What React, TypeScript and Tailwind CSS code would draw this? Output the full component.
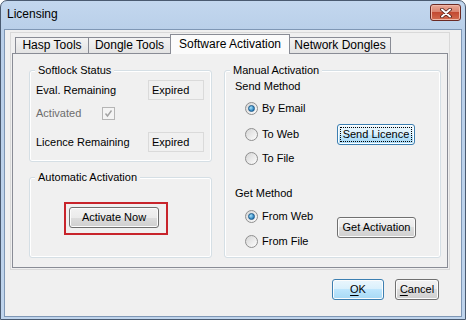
import type { ReactNode } from 'react';

const btnGray =
  'flex items-center justify-center rounded-[3px] border border-[#707070] bg-[linear-gradient(to_bottom,#f2f2f2_0%,#ebebeb_50%,#dddddd_50%,#cfcfcf_100%)] shadow-[inset_0_0_0_1px_#fcfcfc] text-black';
const btnBlue =
  'flex items-center justify-center rounded-[3px] border border-[#3c7fb1] bg-[linear-gradient(to_bottom,#eaf6fd_0%,#d9f0fc_50%,#bee6fd_50%,#a7d9f5_100%)] shadow-[inset_0_0_0_1px_#fcfcfc] text-black';

function Group({ title, className, children }: { title: string; className: string; children: ReactNode }) {
  return (
    <div className={`relative rounded-[3px] border border-[#d5dfe5] shadow-[inset_0_0_0_1px_#ffffff] ${className}`}>
      <span className="absolute left-[5px] top-[-8px] bg-[#f0f0f0] px-[3px] leading-[15px]">{title}</span>
      {children}
    </div>
  );
}

function Field({ children }: { children: ReactNode }) {
  return (
    <div className="flex h-[20px] w-[56px] items-center border border-[#dadada] bg-[#f0f0f0] pl-[3px]">{children}</div>
  );
}

function Radio({ checked, label, className = '' }: { checked?: boolean; label: string; className?: string }) {
  return (
    <div className={`flex h-[20px] items-center gap-[4px] ${className}`}>
      <span className="flex h-[13px] w-[13px] items-center justify-center rounded-full border border-[#8f8f8f] bg-[linear-gradient(135deg,#d6d6d6,#fdfdfd)]">
        {checked && (
          <span className="h-[7px] w-[7px] rounded-full border border-[#1d5a8a] bg-[radial-gradient(circle_at_35%_35%,#a6e3fb,#2a7fbd_70%)]" />
        )}
      </span>
      <span>{label}</span>
    </div>
  );
}

export default function App() {
  return (
    <div className="flex h-[320px] w-[466px] flex-col rounded-t-[7px] border border-[#4a5a70] bg-[linear-gradient(to_bottom,#c3d7ee,#b9cfe9_30px,#bfd4ec)] font-['Liberation_Sans',Arial,sans-serif] text-[12px] leading-[15px] text-black">
      {/* title bar */}
      <div className="flex h-[28px] shrink-0 items-start justify-between">
        <span className="mt-[6px] pl-[6px]">Licensing</span>
        <div className="mr-[4px] mt-[3px] flex h-[17px] w-[31px] items-center justify-center rounded-[3px] border border-[#6b2a24] bg-[linear-gradient(to_bottom,#eaa997_0%,#d98470_45%,#c34a32_50%,#d26c50_100%)] shadow-[inset_0_0_0_1px_#f0b8a8]">
          <svg width="12" height="10" viewBox="0 0 12 10">
            <path d="M2 1.5 L10 8.5 M10 1.5 L2 8.5" stroke="#4a1c16" strokeWidth="3.6" strokeLinecap="round" />
            <path d="M2 1.5 L10 8.5 M10 1.5 L2 8.5" stroke="#ffffff" strokeWidth="2" strokeLinecap="round" />
          </svg>
        </div>
      </div>

      {/* client area */}
      <div className="mx-[3px] mb-[2px] flex h-[288px] flex-col border border-[#7f97b5] bg-[#f0f0f0]">
        <div className="ml-[5px] mt-[2px] flex h-[238px] w-[440px] flex-col border border-[#d9d9d9]">
          {/* tabs */}
          <div className="flex h-[20px] items-end pl-[4px]">
            <div className="flex h-[16px] w-[74px] items-center justify-center border-l border-r border-t border-[#898c95] bg-[linear-gradient(to_bottom,#f4f4f4,#e3e3e3)]">
              Hasp Tools
            </div>
            <div className="-ml-px flex h-[16px] w-[83px] items-center justify-center border-l border-r border-t border-[#898c95] bg-[linear-gradient(to_bottom,#f4f4f4,#e3e3e3)]">
              Dongle Tools
            </div>
            <div className="relative z-10 -mb-px -ml-px flex h-[20px] w-[120px] items-center justify-center border-l border-r border-t border-[#898c95] bg-[#fbfbfb] pb-[1px]">
              Software Activation
            </div>
            <div className="-ml-px flex h-[16px] w-[102px] items-center justify-center border-l border-r border-t border-[#898c95] bg-[linear-gradient(to_bottom,#f4f4f4,#e3e3e3)]">
              Network Dongles
            </div>
          </div>

          {/* tab page */}
          <div className="mx-[1px] flex h-[215px] border border-[#898c95] bg-[#f0f0f0] text-[11px]">
            <div className="ml-[16px] mt-[16px] flex flex-col">
              <Group title="Softlock Status" className="h-[92px] w-[183px]">
                <div className="pl-[6px] pt-[9px]">
                  <div className="flex h-[20px] items-center">
                    <span className="w-[112px]">Eval. Remaining</span>
                    <Field>Expired</Field>
                  </div>
                  <div className="mt-[7px] flex h-[13px] items-center text-[#6d6d6d]">
                    <span className="w-[66px]">Activated</span>
                    <span className="flex h-[13px] w-[13px] items-center justify-center border border-[#b5b5b5] bg-[#f4f4f4]">
                      <svg width="9" height="9" viewBox="0 0 9 9">
                        <path d="M1.5 4.5 L3.5 7 L7.5 1.5" fill="none" stroke="#a3a3a3" strokeWidth="1.4" />
                      </svg>
                    </span>
                  </div>
                  <div className="mt-[12px] flex h-[20px] items-center">
                    <span className="w-[112px]">Licence Remaining</span>
                    <Field>Expired</Field>
                  </div>
                </div>
              </Group>

              <Group title="Automatic Activation" className="mt-[15px] h-[81px] w-[183px]">
                <div className="ml-[34px] mt-[24px] h-[33px] w-[104px] border-2 border-[#c8242b] pl-[3px] pt-[3px]">
                  <button className={`${btnGray} h-[21px] w-[90px]`}>Activate Now</button>
                </div>
              </Group>
            </div>

            <Group title="Manual Activation" className="ml-[12px] mt-[16px] h-[188px] w-[217px]">
              <div className="pl-[10px] pt-[7px]">
                <div className="flex h-[16px] items-center">Send Method</div>
                <div className="mt-[4px] flex">
                  <div className="w-[102px] pl-[10px]">
                    <Radio checked label="By Email" />
                    <Radio label="To Web" className="mt-[6px]" />
                    <Radio label="To File" className="mt-[4px]" />
                  </div>
                  <button
                    className={`${btnBlue} mt-[26px] h-[21px] w-[78px] outline-1 outline-offset-[-4px] outline-black outline-dotted`}
                  >
                    Send Licence
                  </button>
                </div>
                <div className="mt-[17px] flex h-[16px] items-center">Get Method</div>
                <div className="mt-[5px] flex">
                  <div className="w-[102px] pl-[10px]">
                    <Radio checked label="From Web" />
                    <Radio label="From File" className="mt-[5px]" />
                  </div>
                  <button className={`${btnGray} mt-[11px] h-[21px] w-[79px]`}>Get Activation</button>
                </div>
              </div>
            </Group>
          </div>
        </div>

        {/* dialog buttons */}
        <div className="mr-[22px] mt-[9px] flex justify-end gap-[11px] text-[11px]">
          <button className={`${btnBlue} h-[21px] w-[52px]`}>
            <span className="underline underline-offset-2">O</span>K
          </button>
          <button className={`${btnGray} h-[21px] w-[44px]`}>
            <span className="underline underline-offset-2">C</span>ancel
          </button>
        </div>
      </div>
    </div>
  );
}
